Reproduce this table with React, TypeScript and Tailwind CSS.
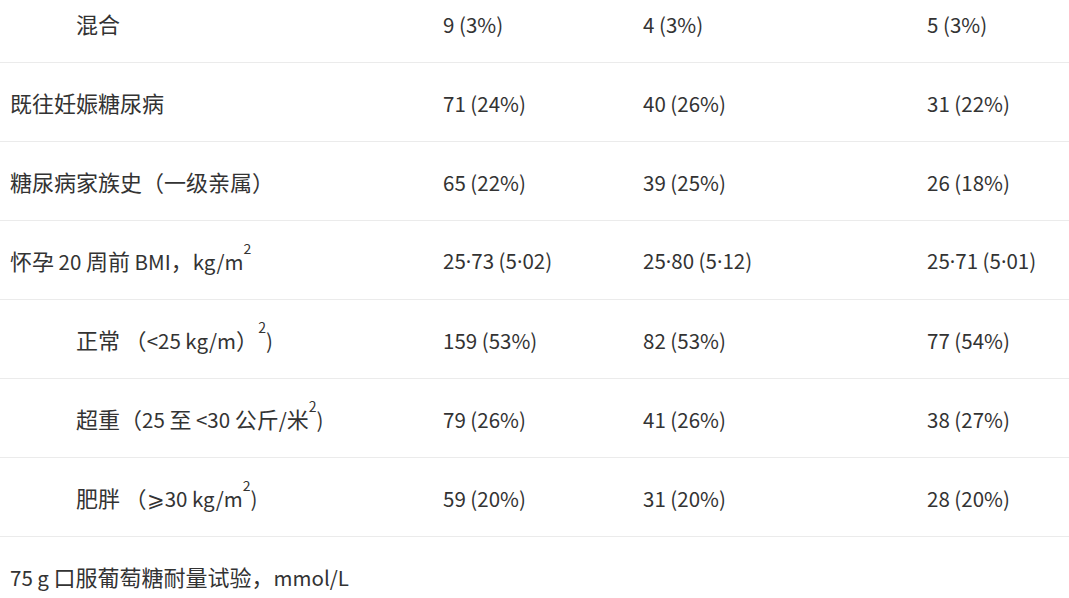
import React from "react";

const Sup = () => (
  <sup className="relative top-[-1.1em] text-[14px] leading-none">2</sup>
);

const L = ({ children }: { children: React.ReactNode }) => (
  <span className="text-[20.5px]">{children}</span>
);

const Dot = () => (
  <span style={{ fontFamily: '"Noto Sans", sans-serif' }}>·</span>
);

const num = (s: string) => {
  const parts = s.split("·");
  return (
    <L>
      {parts.map((p, i) => (
        <React.Fragment key={i}>
          {i > 0 && <Dot />}
          {p}
        </React.Fragment>
      ))}
    </L>
  );
};

type Row = { label: React.ReactNode; indent?: boolean; v: string[]; noBorder?: boolean };

const rows: Row[] = [
  { label: "混合", indent: true, v: ["9 (3%)", "4 (3%)", "5 (3%)"] },
  { label: "既往妊娠糖尿病", v: ["71 (24%)", "40 (26%)", "31 (22%)"] },
  { label: "糖尿病家族史（一级亲属）", v: ["65 (22%)", "39 (25%)", "26 (18%)"] },
  {
    label: (
      <>
        怀孕<L> 20 </L>周前<L> BMI</L>，<L>kg/m</L>
        <Sup />
      </>
    ),
    v: ["25·73 (5·02)", "25·80 (5·12)", "25·71 (5·01)"],
  },
  {
    label: (
      <>
        正常<L> </L>（<L>&lt;25 kg/m</L>）<Sup />
        <L>)</L>
      </>
    ),
    indent: true,
    v: ["159 (53%)", "82 (53%)", "77 (54%)"],
  },
  {
    label: (
      <>
        超重（<L>25 </L>至<L> &lt;30 </L>公斤<L>/</L>米<Sup />
        <L>)</L>
      </>
    ),
    indent: true,
    v: ["79 (26%)", "41 (26%)", "38 (27%)"],
  },
  {
    label: (
      <>
        肥胖<L> </L>（<L>⩾30 kg/m</L>
        <Sup />
        <L>)</L>
      </>
    ),
    indent: true,
    v: ["59 (20%)", "31 (20%)", "28 (20%)"],
  },
  {
    label: (
      <>
        <L>75 g </L>口服葡萄糖耐量试验，<L>mmol/L</L>
      </>
    ),
    v: ["", "", ""],
    noBorder: true,
  },
];

export default function App() {
  return (
    <div
      className="w-[1069px] h-[598px] overflow-hidden bg-white text-[#333] text-[22px]"
      style={{ fontFamily: '"Noto Sans CJK SC", "Noto Sans", sans-serif' }}
    >
      <div className="mt-[-16px]">
        {rows.map((r, i) => (
          <div
            key={i}
            className={`grid grid-cols-[433px_200px_284px_152px] h-[79px] items-center ${
              r.noBorder ? "" : "border-b border-[#ebebeb]"
            }`}
          >
            <div className={`whitespace-nowrap ${r.indent ? "pl-[76px]" : "pl-[10px]"}`}>{r.label}</div>
            <div className="pl-[10px]">{num(r.v[0])}</div>
            <div className="pl-[10px]">{num(r.v[1])}</div>
            <div className="pl-[10px]">{num(r.v[2])}</div>
          </div>
        ))}
      </div>
    </div>
  );
}
